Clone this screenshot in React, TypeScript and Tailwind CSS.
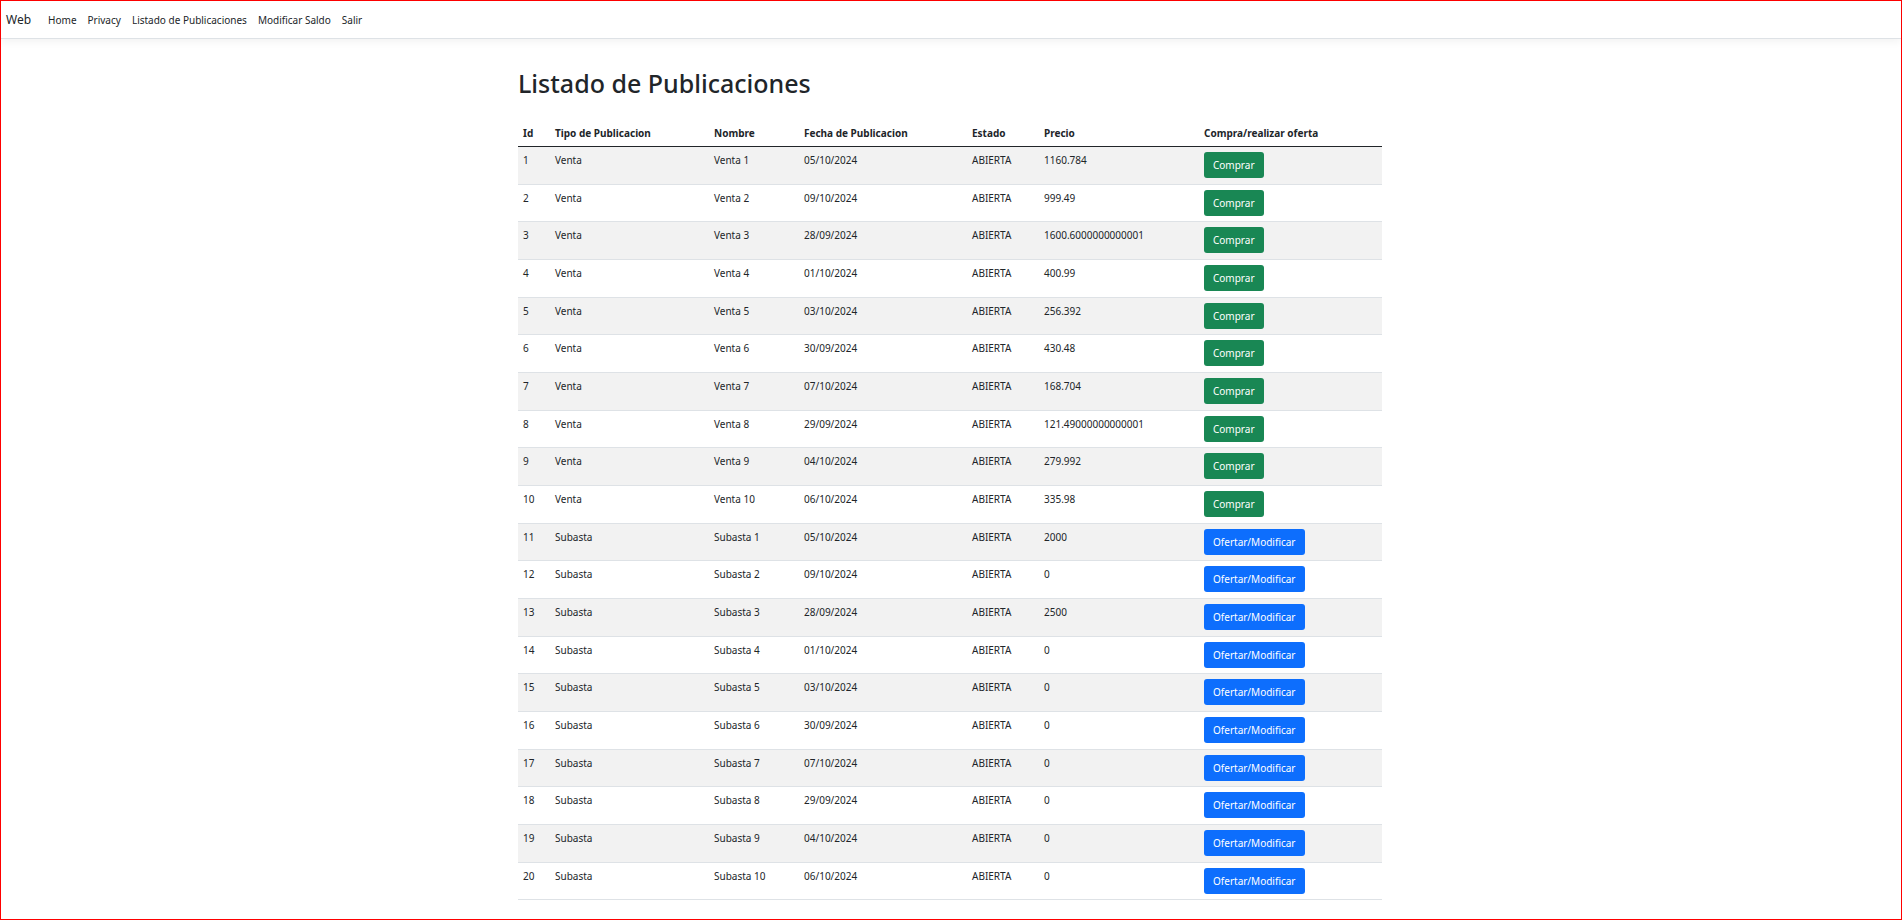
const NAV_LINKS = ['Home', 'Privacy', 'Listado de Publicaciones', 'Modificar Saldo', 'Salir'];

const COLUMNS = [
  { label: 'Id', width: 'w-[32px]' },
  { label: 'Tipo de Publicacion', width: 'w-[159px]' },
  { label: 'Nombre', width: 'w-[90px]' },
  { label: 'Fecha de Publicacion', width: 'w-[168px]' },
  { label: 'Estado', width: 'w-[72px]' },
  { label: 'Precio', width: 'w-[160px]' },
  { label: 'Compra/realizar oferta', width: 'w-[183px]' },
];

const FECHAS = [
  '05/10/2024',
  '09/10/2024',
  '28/09/2024',
  '01/10/2024',
  '03/10/2024',
  '30/09/2024',
  '07/10/2024',
  '29/09/2024',
  '04/10/2024',
  '06/10/2024',
];

const PRECIOS_VENTA = [
  '1160.784',
  '999.49',
  '1600.6000000000001',
  '400.99',
  '256.392',
  '430.48',
  '168.704',
  '121.49000000000001',
  '279.992',
  '335.98',
];

const PRECIOS_SUBASTA = ['2000', '0', '2500', '0', '0', '0', '0', '0', '0', '0'];

type Publicacion = {
  id: number;
  tipo: 'Venta' | 'Subasta';
  nombre: string;
  fecha: string;
  estado: string;
  precio: string;
};

const PUBLICACIONES: Publicacion[] = [
  ...PRECIOS_VENTA.map((precio, i) => ({
    id: i + 1,
    tipo: 'Venta' as const,
    nombre: `Venta ${i + 1}`,
    fecha: FECHAS[i],
    estado: 'ABIERTA',
    precio,
  })),
  ...PRECIOS_SUBASTA.map((precio, i) => ({
    id: i + 11,
    tipo: 'Subasta' as const,
    nombre: `Subasta ${i + 1}`,
    fecha: FECHAS[i],
    estado: 'ABIERTA',
    precio,
  })),
];

function Navbar() {
  return (
    <header className="border-b border-[#dee2e6] shadow-[0_3px_8px_rgba(0,0,0,0.05)]">
      <nav className="flex h-[37px] items-center pl-[5px]">
        <a href="#" className="mr-3 text-[12px] leading-5">
          Web
        </a>
        <ul className="flex items-center gap-px">
          {NAV_LINKS.map((label) => (
            <li key={label}>
              <a href="#" className="block px-[5px] leading-4">
                {label}
              </a>
            </li>
          ))}
        </ul>
      </nav>
    </header>
  );
}

function Row({ item }: { item: Publicacion }) {
  const cell = 'border-b border-[#dee2e6] px-[5px] pt-[5px]';
  return (
    <tr className="h-[38px] align-top odd:bg-[#f2f2f2] nth-[3n+2]:h-[37px]">
      <td className={cell}>{item.id}</td>
      <td className={cell}>{item.tipo}</td>
      <td className={cell}>{item.nombre}</td>
      <td className={cell}>{item.fecha}</td>
      <td className={cell}>{item.estado}</td>
      <td className={cell}>{item.precio}</td>
      <td className={cell}>
        <button
          type="button"
          className={
            item.tipo === 'Venta'
              ? 'block h-[26px] rounded-[3px] bg-[#198754] px-[9px] text-white'
              : 'block h-[26px] rounded-[3px] bg-[#0d6efd] px-[9px] text-white'
          }
        >
          {item.tipo === 'Venta' ? 'Comprar' : 'Ofertar/Modificar'}
        </button>
      </td>
    </tr>
  );
}

export default function App() {
  return (
    <div className="min-h-screen border border-[#ff0000] bg-white font-['Noto_Sans','Open_Sans',sans-serif] text-[10px] leading-4 text-[#212529]">
      <Navbar />
      <main className="mx-auto max-w-[882px] pt-7 pr-[10px] pb-[19px] pl-2">
        <h1 className="text-[25px] leading-8 font-medium">Listado de Publicaciones</h1>
        <table className="mt-[22px] w-full table-fixed border-separate border-spacing-0">
          <thead>
            <tr className="h-[26px]">
              {COLUMNS.map(({ label, width }) => (
                <th
                  key={label}
                  scope="col"
                  className={`${width} border-b border-[#212529] px-[5px] pb-0.5 text-left font-bold whitespace-nowrap`}
                >
                  {label}
                </th>
              ))}
            </tr>
          </thead>
          <tbody>
            {PUBLICACIONES.map((item) => (
              <Row key={item.id} item={item} />
            ))}
          </tbody>
        </table>
      </main>
    </div>
  );
}
